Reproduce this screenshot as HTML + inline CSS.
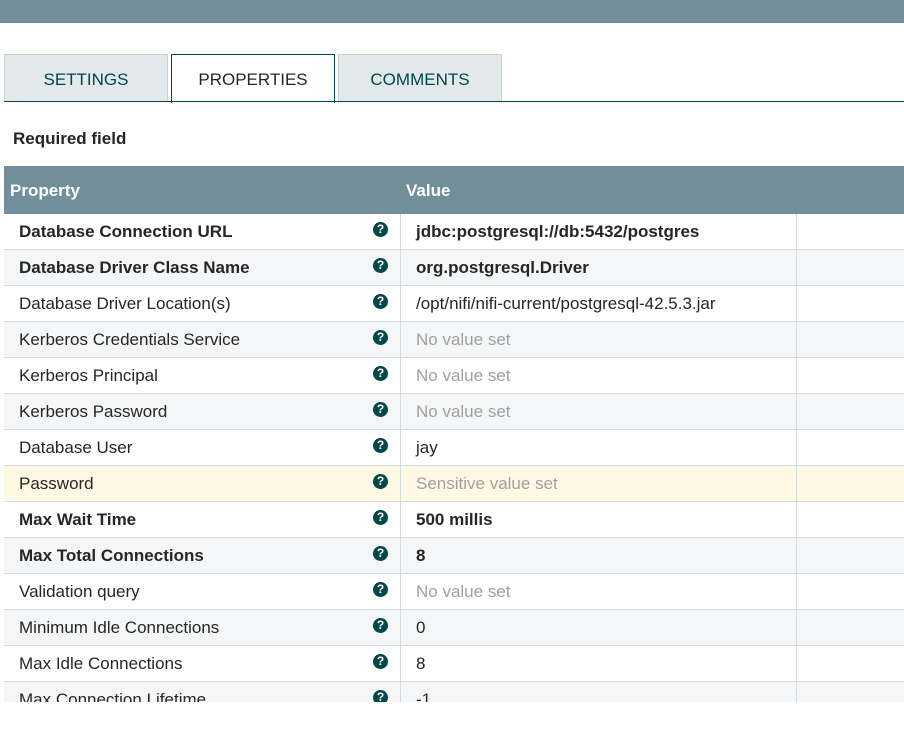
<!DOCTYPE html><html><head><style>
body{margin:0;width:904px;height:729px;background:#fff;font-family:"Liberation Sans",sans-serif;position:relative;overflow:hidden}
.top{position:absolute;left:0;top:0;width:904px;height:23px;background:#728e9b}
.tab{position:absolute;top:54px;height:47px;width:162px;border:1px solid #c7d2d7;border-bottom:none;background:#e3e8eb;color:#004849;font-size:17px;text-align:center;line-height:49px}
.tab.act{background:#fff;border-color:#004849;color:#262626;height:48px}
.line{position:absolute;left:4px;top:101px;width:900px;height:1px;background:#004849}
.req{position:absolute;left:13px;top:129px;font-size:17px;font-weight:bold;color:#262626}
.tbl{position:absolute;left:4px;top:166px;width:900px;height:536px;overflow:hidden}
.hd{height:48px;background:#728e9b;color:#fff;font-weight:bold;font-size:17px;position:relative}
.hd span{position:absolute;top:15px}
.r{height:35px;border-bottom:1px solid #d4dbde;position:relative;font-size:17px;color:#262626}
.r .n{position:absolute;left:15px;top:8px}
.r .v{position:absolute;left:412px;top:8px;color:#262626}
.r .i{position:absolute;left:369px;top:8px;width:15px;height:15px;border-radius:50%;background:#004849;color:#fff;font-size:12px;font-weight:bold;text-align:center;line-height:15px}
.r .d1{position:absolute;left:396px;top:0;bottom:-1px;width:1px;background:#d4dbde}
.r .d2{position:absolute;left:792px;top:0;bottom:-1px;width:1px;background:#d4dbde}
.b{font-weight:bold}.g{color:#a0a0a0!important}
</style></head><body>
<div class="top"></div>
<div class="tab" style="left:4px">SETTINGS</div>
<div class="tab act" style="left:171px">PROPERTIES</div>
<div class="tab" style="left:338px">COMMENTS</div>
<div class="line"></div>
<div class="req">Required field</div>
<div class="tbl">
<div class="hd"><span style="left:6px">Property</span><span style="left:402px">Value</span></div>
<div>
<div class="r" style="background:#fff"><span class="n b">Database Connection URL</span><span class="i">?</span><span class="d1"></span><span class="v b">jdbc:postgresql://db:5432/postgres</span><span class="d2"></span></div>
<div class="r" style="background:#f4f6f7"><span class="n b">Database Driver Class Name</span><span class="i">?</span><span class="d1"></span><span class="v b">org.postgresql.Driver</span><span class="d2"></span></div>
<div class="r" style="background:#fff"><span class="n">Database Driver Location(s)</span><span class="i">?</span><span class="d1"></span><span class="v">/opt/nifi/nifi-current/postgresql-42.5.3.jar</span><span class="d2"></span></div>
<div class="r" style="background:#f4f6f7"><span class="n">Kerberos Credentials Service</span><span class="i">?</span><span class="d1"></span><span class="v g">No value set</span><span class="d2"></span></div>
<div class="r" style="background:#fff"><span class="n">Kerberos Principal</span><span class="i">?</span><span class="d1"></span><span class="v g">No value set</span><span class="d2"></span></div>
<div class="r" style="background:#f4f6f7"><span class="n">Kerberos Password</span><span class="i">?</span><span class="d1"></span><span class="v g">No value set</span><span class="d2"></span></div>
<div class="r" style="background:#fff"><span class="n">Database User</span><span class="i">?</span><span class="d1"></span><span class="v">jay</span><span class="d2"></span></div>
<div class="r" style="background:#fff9e3"><span class="n">Password</span><span class="i">?</span><span class="d1"></span><span class="v g">Sensitive value set</span><span class="d2"></span></div>
<div class="r" style="background:#fff"><span class="n b">Max Wait Time</span><span class="i">?</span><span class="d1"></span><span class="v b">500 millis</span><span class="d2"></span></div>
<div class="r" style="background:#f4f6f7"><span class="n b">Max Total Connections</span><span class="i">?</span><span class="d1"></span><span class="v b">8</span><span class="d2"></span></div>
<div class="r" style="background:#fff"><span class="n">Validation query</span><span class="i">?</span><span class="d1"></span><span class="v g">No value set</span><span class="d2"></span></div>
<div class="r" style="background:#f4f6f7"><span class="n">Minimum Idle Connections</span><span class="i">?</span><span class="d1"></span><span class="v">0</span><span class="d2"></span></div>
<div class="r" style="background:#fff"><span class="n">Max Idle Connections</span><span class="i">?</span><span class="d1"></span><span class="v">8</span><span class="d2"></span></div>
<div class="r" style="background:#f4f6f7"><span class="n">Max Connection Lifetime</span><span class="i">?</span><span class="d1"></span><span class="v">-1</span><span class="d2"></span></div>
</div></div>
</body></html>
